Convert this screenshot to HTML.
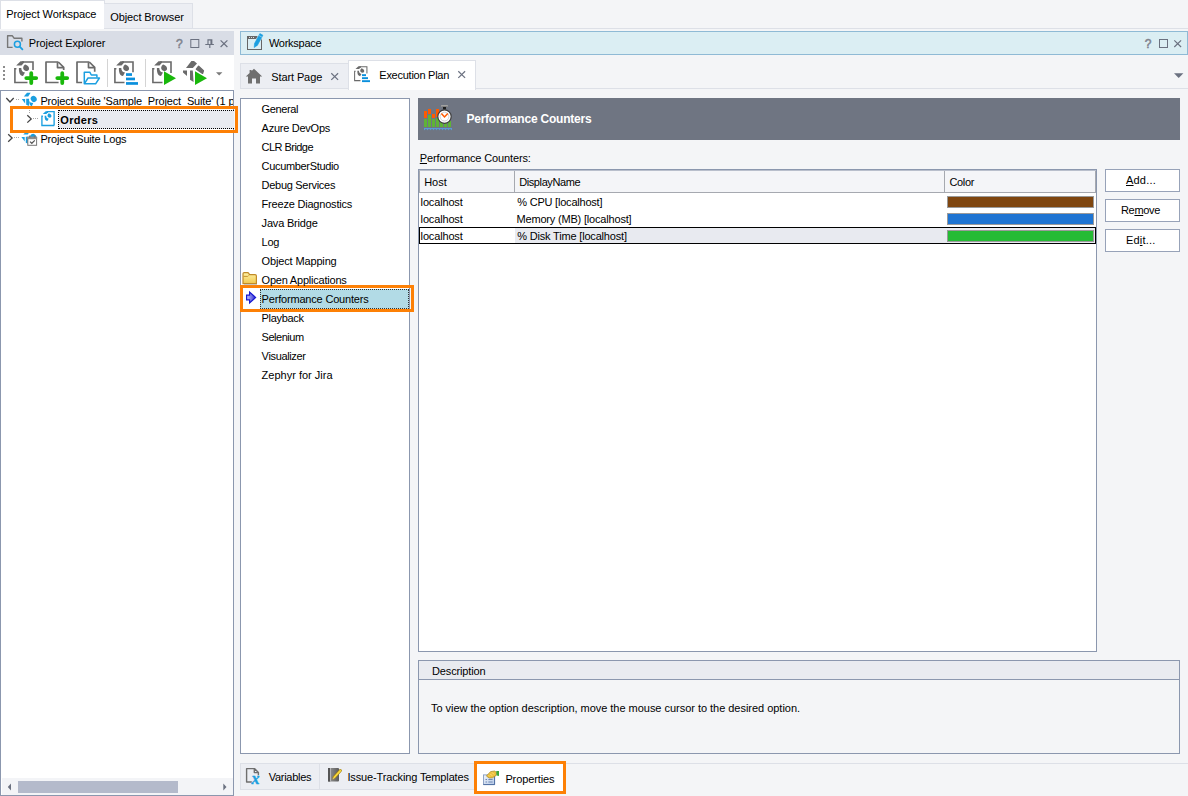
<!DOCTYPE html>
<html lang="en"><head><meta charset="utf-8"><title>Project Workspace</title>
<style>
*{box-sizing:border-box;margin:0;padding:0}
html,body{width:1188px;height:796px;overflow:hidden;background:#f4f5f7}
body{position:relative;font-family:"Liberation Sans",sans-serif;font-size:11px;color:#000}
.a{position:absolute}
.t{position:absolute;white-space:nowrap;line-height:16px;height:16px}
svg{position:absolute;overflow:visible}
u{text-decoration:underline;text-underline-offset:1px}
.btn{position:absolute;width:75px;height:23px;background:#fff;border:1px solid #97a2b8}
.bar{position:absolute;left:947px;width:147px;height:12px;border:1px solid #9a9a9a}

</style></head><body>
<div class="a" style="left:0px;top:28px;width:1188px;height:1px;background:#dde0e7;"></div>
<div class="a" style="left:0px;top:0px;width:104.5px;height:29px;background:#fff;border:1px solid #dde0e7;border-bottom:none;"></div>
<div class="a" style="left:104px;top:3px;width:89px;height:26px;background:#eceef3;border:1px solid #dde0e7;border-left:none;"></div>
<div class="a" style="left:0px;top:31px;width:234px;height:24px;background:#d9dde6;"></div>
<div class="a" style="left:0px;top:55px;width:234px;height:35px;background:#fff;"></div>
<div class="a" style="left:0px;top:90px;width:234px;height:705.5px;background:#fff;border:1px solid #8b97ae;"></div>
<div class="a" style="left:58px;top:110px;width:176px;height:19px;background:#e9ebf0;border:1px dotted #000;border-right:none;"></div>
<div class="a" style="left:10px;top:106px;width:228px;height:27px;border:3px solid #fd8005;z-index:5;"></div>
<div class="a" style="left:1.5px;top:778px;width:231.5px;height:16.5px;background:#f3f4f7;"></div>
<div class="a" style="left:18px;top:781px;width:160px;height:12px;background:#b4bacb;"></div>
<div class="a" style="left:240px;top:31px;width:948px;height:24px;background:#dbeef3;border:1px solid #8fbad5;"></div>
<div class="a" style="left:240px;top:88px;width:948px;height:1px;background:#dde0e7;"></div>
<div class="a" style="left:240px;top:63px;width:109px;height:26px;background:#eceef3;border:1px solid #dde0e7;"></div>
<div class="a" style="left:348px;top:60px;width:128px;height:30px;background:#fff;border:1px solid #dde0e7;border-bottom:none;"></div>
<div class="a" style="left:240px;top:98px;width:170px;height:656px;background:#fff;border:1px solid #8b97ae;"></div>
<div class="a" style="left:260px;top:289px;width:149px;height:19.5px;background:#b2dbe6;border:1px dotted #333;"></div>
<div class="a" style="left:240px;top:285px;width:174px;height:27px;border:3px solid #fd8005;"></div>
<div class="a" style="left:418px;top:98px;width:762px;height:41.5px;background:#6f7582;"></div>
<div class="a" style="left:418px;top:169px;width:679px;height:483px;background:#fff;border:1px solid #8b97ae;"></div>
<div class="a" style="left:419px;top:170px;width:677px;height:23px;background:#f4f5f8;border-bottom:1px solid #a6a9b0;border-top:1px solid #b9bfcc;border-left:1px solid #a6a9b0;"></div>
<div class="a" style="left:514px;top:171px;width:1px;height:21px;background:#a6a9b0;"></div>
<div class="a" style="left:944px;top:171px;width:1px;height:21px;background:#a6a9b0;"></div>
<div class="a" style="left:1095px;top:171px;width:1px;height:21px;background:#a6a9b0;"></div>
<div class="a" style="left:515px;top:227.5px;width:581px;height:16px;background:#e8eaf0;"></div>
<div class="a" style="left:419px;top:227px;width:677px;height:17px;border:1px solid #000;"></div>
<div class="bar" style="top:195.5px;background:#7f4610"></div>
<div class="bar" style="top:212.5px;background:#1e74d2"></div>
<div class="bar" style="top:229.5px;background:#25bb35"></div>
<div class="btn" style="left:1105px;top:169px"></div>
<div class="btn" style="left:1105px;top:199px"></div>
<div class="btn" style="left:1105px;top:229px"></div>
<div class="a" style="left:418px;top:660px;width:762px;height:94px;border:1px solid #8b97ae;"></div>
<div class="a" style="left:419px;top:661px;width:760px;height:18px;background:#e9ebf0;"></div>
<div class="a" style="left:419px;top:679px;width:760px;height:1px;background:#8b97ae;"></div>
<div class="a" style="left:240px;top:762.5px;width:948px;height:1px;background:#dde0e7;"></div>
<div class="a" style="left:240px;top:762.5px;width:235px;height:27px;background:#eceef3;border:1px solid #dde0e7;"></div>
<div class="a" style="left:319px;top:763px;width:1px;height:26px;background:#dde0e7;"></div>
<div class="a" style="left:474px;top:761px;width:92px;height:33px;background:#fff;border:3px solid #fd8005;"></div>
<svg width="1188" height="796" viewBox="0 0 1188 796" style="left:0;top:0"><rect x="3" y="66" width="2" height="2" fill="#8c8c8c"/><rect x="3" y="70" width="2" height="2" fill="#8c8c8c"/><rect x="3" y="74" width="2" height="2" fill="#8c8c8c"/><rect x="3" y="78" width="2" height="2" fill="#8c8c8c"/><path d="M16.40,68.70 H14.90 V82.50 H27.50" fill="none" stroke="#6a6a6a" stroke-width="1.60"/><path d="M22.00,62.00 H33.00 V70.00" fill="none" stroke="#6a6a6a" stroke-width="1.60"/><path d="M20.50,61.20 L24.00,61.20 L24.00,62.80 L21.50,65.50 L16.20,65.50 Z" fill="#6a6a6a"/><path d="M25.00,64.40 C27.50,65.00 29.60,67.00 29.00,69.20 C28.50,71.20 25.50,71.50 24.00,70.00 C22.60,68.50 23.00,66.00 25.00,64.40 Z" fill="#6a6a6a"/><path d="M18.90,68.00 H21.30 C21.30,70.40 22.20,71.80 25.00,72.60 L23.00,75.90 C19.60,75.50 18.80,72.50 18.90,68.00 Z" fill="#6a6a6a"/><path d="M26.30 78.10 h9.9 M31.25 73.20 v9.8" stroke="#19b80b" stroke-width="3.8" stroke-linecap="round" fill="none"/><path d="M58.60 82.50 H46.00 V62.00 H58.30" fill="none" stroke="#6a6a6a" stroke-width="1.7" stroke-linejoin="round"/><path d="M58.30 62.00 L63.70 67.40 V70.00" fill="none" stroke="#6a6a6a" stroke-width="1.7" stroke-linejoin="round"/><path d="M57.50 62.20 V67.60 H63.50" fill="none" stroke="#6a6a6a" stroke-width="1.7" stroke-linejoin="round"/><path d="M57.30 78.10 h9.9 M62.25 73.20 v9.8" stroke="#19b80b" stroke-width="3.8" stroke-linecap="round" fill="none"/><path d="M82.10 82.50 H77.00 V62.00 H89.30" fill="none" stroke="#6a6a6a" stroke-width="1.7" stroke-linejoin="round"/><path d="M89.30 62.00 L94.70 67.40 V71.70" fill="none" stroke="#6a6a6a" stroke-width="1.7" stroke-linejoin="round"/><path d="M88.50 62.20 V67.60 H94.50" fill="none" stroke="#6a6a6a" stroke-width="1.7" stroke-linejoin="round"/><path d="M84.3 83.5 V72.2 H89.8 L91.3 75 H96.9 V77.6" fill="none" stroke="#1b9fe0" stroke-width="1.5" stroke-linejoin="round"/><path d="M84.3 83.8 L88 78 H99.4 L95.6 83.8 Z" fill="none" stroke="#1b9fe0" stroke-width="1.5" stroke-linejoin="round"/><rect x="107" y="59" width="1" height="28" fill="#d4d4d4"/><path d="M116.40,68.70 H114.90 V82.50 H124.50" fill="none" stroke="#6a6a6a" stroke-width="1.60"/><path d="M122.00,62.00 H133.00 V72.20" fill="none" stroke="#6a6a6a" stroke-width="1.60"/><path d="M120.50,61.20 L124.00,61.20 L124.00,62.80 L121.50,65.50 L116.20,65.50 Z" fill="#6a6a6a"/><path d="M125.00,64.40 C127.50,65.00 129.60,67.00 129.00,69.20 C128.50,71.20 125.50,71.50 124.00,70.00 C122.60,68.50 123.00,66.00 125.00,64.40 Z" fill="#6a6a6a"/><path d="M118.90,68.00 H121.30 C121.30,70.40 122.20,71.80 125.00,72.60 L123.00,75.90 C119.60,75.50 118.80,72.50 118.90,68.00 Z" fill="#6a6a6a"/><rect x="126" y="73.2" width="6" height="2.7" fill="#0a8fdc"/><rect x="126" y="77.6" width="9" height="2.7" fill="#0a8fdc"/><rect x="126" y="82.1" width="12" height="2.7" fill="#0a8fdc"/><rect x="145" y="59" width="1" height="28" fill="#d4d4d4"/><path d="M154.40,68.70 H152.90 V82.50 H162.50" fill="none" stroke="#6a6a6a" stroke-width="1.60"/><path d="M160.00,62.00 H171.00 V73.00" fill="none" stroke="#6a6a6a" stroke-width="1.60"/><path d="M158.50,61.20 L162.00,61.20 L162.00,62.80 L159.50,65.50 L154.20,65.50 Z" fill="#6a6a6a"/><path d="M163.00,64.40 C165.50,65.00 167.60,67.00 167.00,69.20 C166.50,71.20 163.50,71.50 162.00,70.00 C160.60,68.50 161.00,66.00 163.00,64.40 Z" fill="#6a6a6a"/><path d="M156.90,68.00 H159.30 C159.30,70.40 160.20,71.80 163.00,72.60 L161.00,75.90 C157.60,75.50 156.80,72.50 156.90,68.00 Z" fill="#6a6a6a"/><path d="M164.00 71.20 V84.90 L176.00 78.30 Z" fill="#19b80b"/><path d="M191.40,61.00 L194.00,61.00 L197.00,63.40 L192.80,68.00 L186.00,68.00 Z" fill="#6a6a6a"/><path d="M183.00,70.60 L187.00,70.60 L187.00,76.00 L183.00,72.50 Z" fill="#6a6a6a"/><path d="M190.00,70.60 L192.80,70.60 L193.60,82.00 L190.00,79.80 Z" fill="#6a6a6a"/><path d="M198.60,66.20 L203.40,70.80 L202.60,73.40 L196.40,69.20 Z" fill="#6a6a6a" stroke="#6a6a6a" stroke-width="1.40" stroke-linejoin="round"/><path d="M195.00 71.20 V84.90 L207.00 78.30 Z" fill="#19b80b"/><path d="M216 72.3 h6.4 l-3.2 3.2 Z" fill="#7a7a7a"/><path d="M12.6 47.4 H7.6 V35.8 H12.4 L14 38.2 H21.9 V41.6" fill="none" stroke="#777" stroke-width="1.4" stroke-linejoin="round"/><circle cx="17.4" cy="44.3" r="3" fill="none" stroke="#1b9fe0" stroke-width="1.5"/><path d="M19.7 46.7 L22.4 49.4" stroke="#1b9fe0" stroke-width="1.8" stroke-linecap="round"/><text x="176.1" y="48" font-family="'Liberation Sans',sans-serif" font-size="12" fill="#7f838e" stroke="#7f838e" stroke-width="0.5">?</text><rect x="190.8" y="39.5" width="8" height="8" fill="none" stroke="#6b7180" stroke-width="1"/><path d="M205.3 44.5 h8.6 M209.8 44.5 v3.6 M208.0 44.5 v-4.6 h3.8 v4.6 M211.0 40 v4.5" fill="none" stroke="#6b7180" stroke-width="1.15"/><path d="M220.6 40.4 l6.8 6.6 M227.4 40.4 l-6.8 6.6" fill="none" stroke="#6b7180" stroke-width="1.2"/><text x="1144.8" y="48" font-family="'Liberation Sans',sans-serif" font-size="12" fill="#7f838e" stroke="#7f838e" stroke-width="0.5">?</text><rect x="1159.5" y="39.5" width="8" height="8" fill="none" stroke="#6b7180" stroke-width="1"/><path d="M1174.3 40.4 l6.8 6.6 M1181.1 40.4 l-6.8 6.6" fill="none" stroke="#6b7180" stroke-width="1.2"/><rect x="247.5" y="36.5" width="14" height="13" fill="none" stroke="#666" stroke-width="1"/><rect x="247" y="36" width="15" height="3" fill="#666"/><rect x="249" y="37" width="1" height="1" fill="#ddd"/><rect x="251" y="37" width="1" height="1" fill="#ddd"/><rect x="253" y="37" width="1" height="1" fill="#ddd"/><path d="M261.2 34.8 L256.4 43.6" stroke="#dbeef3" stroke-width="5" stroke-linecap="butt"/><path d="M259.9 33.6 L262.9 35.2 L257.5 45.2 L254.2 47.5 L254.5 43.6 Z" fill="#1b9fe0" stroke="#1b9fe0" stroke-width="0.6" stroke-linejoin="round"/><path d="M261.9 37.1 L258.8 35.4" stroke="#bfe3f3" stroke-width="0.6"/><path d="M254 68.8 L262.2 76.6 H260 V83.4 H256 V78.6 H252 V83.4 H248 V76.6 H245.8 L249.6 73 V70 H251.6 V71 Z" fill="#6f6f6f"/><path d="M331.3 73.3 l6.8 6.6 M338.1 73.3 l-6.8 6.6" fill="none" stroke="#6b7180" stroke-width="1.2"/><path d="M458.3 71.3 l6.8 6.6 M465.1 71.3 l-6.8 6.6" fill="none" stroke="#6b7180" stroke-width="1.2"/><path d="M355.63,71.24 H354.61 V80.62 H360.46" fill="none" stroke="#6a6a6a" stroke-width="1.02"/><path d="M359.44,66.68 H366.92 V73.48" fill="none" stroke="#6a6a6a" stroke-width="1.02"/><path d="M358.42,66.14 L360.80,66.14 L360.80,67.22 L359.10,69.06 L355.50,69.06 Z" fill="#6a6a6a"/><path d="M361.48,68.31 C363.18,68.72 364.61,70.08 364.20,71.58 C363.86,72.94 361.82,73.14 360.80,72.12 C359.85,71.10 360.12,69.40 361.48,68.31 Z" fill="#6a6a6a"/><path d="M357.33,70.76 H358.96 C358.96,72.39 359.58,73.34 361.48,73.89 L360.12,76.13 C357.81,75.86 357.26,73.82 357.33,70.76 Z" fill="#6a6a6a"/><rect x="362" y="74.2" width="4" height="1.9" fill="#0a8fdc"/><rect x="362" y="77.2" width="6" height="1.9" fill="#0a8fdc"/><rect x="362" y="80.2" width="8" height="1.9" fill="#0a8fdc"/><path d="M1174 73.2 h9.4 l-4.7 4.8 Z" fill="#6b7180"/><path d="M6.3 98 L10 102 L13.7 98" fill="none" stroke="#444" stroke-width="1.3"/><path d="M27.3 115.2 L31.2 118.9 L27.3 122.6" fill="none" stroke="#444" stroke-width="1.3"/><path d="M8.2 134.3 L12.1 138 L8.2 141.7" fill="none" stroke="#444" stroke-width="1.3"/><rect x="16" y="99" width="1" height="1" fill="#a8a8a8"/><rect x="18" y="99" width="1" height="1" fill="#a8a8a8"/><rect x="14" y="137" width="1" height="1" fill="#a8a8a8"/><rect x="16" y="137" width="1" height="1" fill="#a8a8a8"/><rect x="18" y="137" width="1" height="1" fill="#a8a8a8"/><rect x="33" y="118" width="1" height="1" fill="#a8a8a8"/><rect x="35" y="118" width="1" height="1" fill="#a8a8a8"/><rect x="37" y="118" width="1" height="1" fill="#a8a8a8"/><rect x="29" y="110" width="1" height="1" fill="#a8a8a8"/><rect x="29" y="112" width="1" height="1" fill="#a8a8a8"/><path d="M27.00,92.80 L30.60,92.80 L28.20,96.50 L23.80,96.50 Z" fill="#1b9fe0"/><path d="M21.80,99.10 L25.10,99.10 L25.10,103.50 Z" fill="#1b9fe0"/><path d="M26.20,98.70 L29.10,98.70 L29.10,106.00 L26.20,104.70 Z" fill="#1b9fe0"/><ellipse cx="33.70" cy="98.90" rx="2.9" ry="3.2" transform="rotate(-35 33.70 98.90)" fill="#1b9fe0"/><path d="M29.20,100.70 C29.80,102.30 31.00,102.90 33.20,102.90 L32.00,105.90 C30.60,105.90 29.20,105.10 29.20,100.70 Z" fill="#1b9fe0"/><path d="M42.92,116.20 H41.91 V125.51 H54.26" fill="none" stroke="#1b9fe0" stroke-width="1.35"/><path d="M46.70,111.67 H54.12 V125.58" fill="none" stroke="#1b9fe0" stroke-width="1.35"/><path d="M45.69,111.14 L48.05,111.14 L48.05,112.22 L46.36,114.04 L42.78,114.04 Z" fill="#1b9fe0"/><path d="M48.72,113.30 C50.41,113.70 51.83,115.05 51.42,116.53 C51.09,117.89 49.06,118.09 48.05,117.08 C47.10,116.06 47.38,114.38 48.72,113.30 Z" fill="#1b9fe0"/><path d="M44.61,115.72 H46.23 C46.23,117.34 46.83,118.29 48.72,118.83 L47.38,121.06 C45.08,120.79 44.54,118.76 44.61,115.72 Z" fill="#1b9fe0"/><path d="M26.60,130.80 L30.20,130.80 L27.80,134.50 L23.40,134.50 Z" fill="#1b9fe0"/><path d="M21.40,137.10 L24.70,137.10 L24.70,141.50 Z" fill="#1b9fe0"/><path d="M25.80,136.70 L28.70,136.70 L28.70,144.00 L25.80,142.70 Z" fill="#1b9fe0"/><ellipse cx="33.30" cy="136.90" rx="2.9" ry="3.2" transform="rotate(-35 33.30 136.90)" fill="#1b9fe0"/><path d="M28.80,138.70 C29.40,140.30 30.60,140.90 32.80,140.90 L31.60,143.90 C30.20,143.90 28.80,143.10 28.80,138.70 Z" fill="#1b9fe0"/><rect x="27.8" y="137.5" width="8.8" height="7.8" fill="#fff" stroke="#777" stroke-width="1"/><rect x="27.3" y="136.6" width="9.8" height="2.6" fill="#8e8e8e"/><rect x="29" y="135.6" width="1.6" height="2" fill="#777"/><rect x="33.8" y="135.6" width="1.6" height="2" fill="#777"/><path d="M30 141.6 L31.8 143.3 L34.8 140.4" fill="none" stroke="#555" stroke-width="1.2"/><path d="M11 783.6 V790.4 L7.8 787 Z" fill="#6b7180"/><path d="M223.3 783.6 V790.4 L226.5 787 Z" fill="#6b7180"/><path d="M243 283.6 V273.8 Q243 272.6 244.2 272.6 H247.4 Q248.4 272.6 248.9 273.6 L249.4 274.6 H255 Q256.4 274.6 256.4 276 V283.6 Z" fill="url(#fg)" stroke="#c08a28" stroke-width="1.2"/><path d="M243.6 276.4 H247.6 L248.6 275.6" fill="none" stroke="#c08a28" stroke-width="0.9"/><path d="M244 284.6 H257" stroke="#b9b9b9" stroke-width="0.8"/><defs><linearGradient id="ag" x1="0" x2="1" y1="0" y2="0"><stop offset="0" stop-color="#c4c4ff"/><stop offset="1" stop-color="#2a2ad0"/></linearGradient><linearGradient id="fg" x1="0" x2="0" y1="0" y2="1"><stop offset="0" stop-color="#fff3a8"/><stop offset="1" stop-color="#f0c84e"/></linearGradient></defs><path d="M246.6 295.2 H249.6 V292 L255.6 297.5 L249.6 303 V299.8 H246.6 Z" fill="url(#ag)" stroke="#1717cf" stroke-width="1.2" stroke-linejoin="miter"/><rect x="424" y="111" width="3" height="7" fill="#ff5a00"/><rect x="424" y="119" width="3" height="8" fill="#5fb336"/><rect x="428" y="109" width="3" height="5" fill="#ff5a00"/><rect x="428" y="115" width="3" height="12" fill="#5fb336"/><rect x="432" y="114" width="3" height="4" fill="#ff5a00"/><rect x="432" y="119" width="3" height="8" fill="#5fb336"/><rect x="436" y="109" width="3" height="8" fill="#ff5a00"/><rect x="436" y="118" width="3" height="9" fill="#5fb336"/><rect x="440" y="121" width="3" height="6" fill="#5fb336"/><rect x="444" y="121" width="3" height="6" fill="#5fb336"/><rect x="448" y="121" width="3" height="6" fill="#5fb336"/><rect x="424" y="128" width="28" height="1.2" fill="#5b9bd5"/><path d="M424 129.6 H452" stroke="#5b9bd5" stroke-width="1" stroke-dasharray="1 2"/><rect x="441" y="105" width="7" height="2" rx="0.6" fill="#a2a2a2"/><rect x="441.4" y="106.2" width="6.2" height="0.8" fill="#7a7a7a"/><rect x="443" y="107" width="3" height="2.4" fill="#1e1e1e"/><circle cx="444.5" cy="116.6" r="6.7" fill="#fff" stroke="#3c3c3c" stroke-width="1.2"/><circle cx="444.5" cy="116.6" r="4.4" fill="none" stroke="#d2d2d2" stroke-width="1"/><path d="M441.4 113.4 L444.5 116.9 L447.8 113.4" fill="none" stroke="#ff5a00" stroke-width="1.5"/><path d="M251.8 782 H246.6 V768.6 H254.5 L258.4 772.4 V775.2 M254.3 768.8 V772.6 H258.2" fill="none" stroke="#6f6f6f" stroke-width="1.4" stroke-linejoin="round"/><text x="251.6" y="783.8" stroke="#1b9fe0" stroke-width="0.4" font-family="'Liberation Serif',serif" font-style="italic" font-weight="bold" font-size="16" fill="#1b9fe0">x</text><defs><linearGradient id="ng" x1="0" x2="1" y1="0" y2="0"><stop offset="0" stop-color="#9a9a9a"/><stop offset="1" stop-color="#5a5a5a"/></linearGradient></defs><rect x="328" y="768" width="11" height="13.6" rx="1" fill="url(#ng)"/><rect x="328" y="768" width="2.2" height="13.6" fill="#555"/><rect x="330.2" y="768" width="0.8" height="13.6" fill="#c4c4c4"/><path d="M340.4 770.6 L333.8 777.8" stroke="#9a7a14" stroke-width="3" stroke-linecap="round"/><path d="M340.4 770.6 L333.8 777.8" stroke="#f8d83a" stroke-width="1.9" stroke-linecap="round"/><path d="M332.4 779.6 L332.9 777.2 L334.6 778.9 Z" fill="#e8d9a0" stroke="#7a6a30" stroke-width="0.4"/><defs><linearGradient id="pg" x1="0" x2="1" y1="0" y2="1"><stop offset="0" stop-color="#f2f6fc"/><stop offset="1" stop-color="#b4c8e6"/></linearGradient></defs><rect x="483.5" y="774.9" width="11" height="9.6" fill="url(#pg)" stroke="#8ea3c6" stroke-width="1"/><path d="M483.4 784.6 H494.6 V775" fill="none" stroke="#4f6fa3" stroke-width="1"/><path d="M485.5 779.5 H487 M488.4 779.5 H492.6 M485.5 782 H487 M488.4 782 H492.6" stroke="#6f88b4" stroke-width="1"/><path d="M486.4 776 L490.6 771.6 L494.6 771 L496.6 772.4 L496.2 775.4 L492.4 777.8 L489.2 778 Z" fill="#efc03c" stroke="#a8882a" stroke-width="0.7" stroke-linejoin="round"/><path d="M488.6 775.4 l1 1 M490.2 773.8 l2 2 M492 772.4 l2 2" stroke="#fbe9a0" stroke-width="0.7"/><path d="M496.2 771 H499 V776 L496.6 775.4 Z" fill="#3da53d"/></svg>
<div class="t" style="left:6.3px;top:6.2px;font-size:11px;letter-spacing:-0.124px;">Project Workspace</div>
<div class="t" style="left:110.3px;top:9.2px;font-size:11px;letter-spacing:-0.122px;">Object Browser</div>
<div class="t" style="left:28.8px;top:35.2px;font-size:11px;letter-spacing:-0.110px;">Project Explorer</div>
<div class="t" style="left:268.9px;top:34.8px;font-size:11px;letter-spacing:-0.259px;">Workspace</div>
<div class="t" style="left:271.2px;top:69.2px;font-size:11px;letter-spacing:-0.098px;">Start Page</div>
<div class="t" style="left:379.3px;top:66.9px;font-size:11px;letter-spacing:-0.256px;">Execution Plan</div>
<div class="t" style="left:40.4px;top:92.9px;font-size:11px;letter-spacing:-0.158px;width:192.6px;overflow:hidden;">Project Suite 'Sample_Project_Suite' (1 p</div>
<div class="t" style="left:60.3px;top:111.8px;font-size:11px;letter-spacing:0.320px;font-weight:bold;">Orders</div>
<div class="t" style="left:40.4px;top:130.8px;font-size:11px;letter-spacing:-0.182px;">Project Suite Logs</div>
<div class="t" style="left:261.6px;top:100.8px;font-size:11px;letter-spacing:-0.377px;">General</div>
<div class="t" style="left:261.6px;top:119.8px;font-size:11px;letter-spacing:-0.261px;">Azure DevOps</div>
<div class="t" style="left:261.6px;top:138.8px;font-size:11px;letter-spacing:-0.546px;">CLR Bridge</div>
<div class="t" style="left:261.6px;top:157.8px;font-size:11px;letter-spacing:-0.331px;">CucumberStudio</div>
<div class="t" style="left:261.6px;top:176.8px;font-size:11px;letter-spacing:-0.297px;">Debug Services</div>
<div class="t" style="left:261.6px;top:195.8px;font-size:11px;letter-spacing:-0.203px;">Freeze Diagnostics</div>
<div class="t" style="left:261.6px;top:214.8px;font-size:11px;letter-spacing:-0.190px;">Java Bridge</div>
<div class="t" style="left:261.6px;top:233.8px;font-size:11px;letter-spacing:-0.286px;">Log</div>
<div class="t" style="left:261.6px;top:252.8px;font-size:11px;letter-spacing:-0.146px;">Object Mapping</div>
<div class="t" style="left:261.6px;top:271.8px;font-size:11px;letter-spacing:-0.216px;">Open Applications</div>
<div class="t" style="left:261.6px;top:290.8px;font-size:11px;letter-spacing:-0.184px;">Performance Counters</div>
<div class="t" style="left:261.6px;top:309.8px;font-size:11px;letter-spacing:-0.330px;">Playback</div>
<div class="t" style="left:261.6px;top:328.8px;font-size:11px;letter-spacing:-0.482px;">Selenium</div>
<div class="t" style="left:261.6px;top:347.8px;font-size:11px;letter-spacing:-0.350px;">Visualizer</div>
<div class="t" style="left:261.6px;top:366.8px;font-size:11px;letter-spacing:0.005px;">Zephyr for Jira</div>
<div class="t" style="left:466.4px;top:110.8px;font-size:12px;letter-spacing:-0.219px;font-weight:bold;color:#fff;">Performance Counters</div>
<div class="t" style="left:419.8px;top:150.0px;font-size:11px;letter-spacing:-0.130px;"><u>P</u>erformance Counters:</div>
<div class="t" style="left:424.2px;top:173.8px;font-size:11px;letter-spacing:-0.031px;">Host</div>
<div class="t" style="left:519.2px;top:173.8px;font-size:11px;letter-spacing:-0.402px;">DisplayName</div>
<div class="t" style="left:949.5px;top:173.8px;font-size:11px;letter-spacing:-0.359px;">Color</div>
<div class="t" style="left:420.6px;top:193.8px;font-size:11px;letter-spacing:-0.158px;">localhost</div>
<div class="t" style="left:420.6px;top:210.8px;font-size:11px;letter-spacing:-0.158px;">localhost</div>
<div class="t" style="left:420.6px;top:227.8px;font-size:11px;letter-spacing:-0.158px;">localhost</div>
<div class="t" style="left:517.3px;top:193.8px;font-size:11px;letter-spacing:-0.215px;">% CPU [localhost]</div>
<div class="t" style="left:516.5px;top:210.8px;font-size:11px;letter-spacing:-0.183px;">Memory (MB) [localhost]</div>
<div class="t" style="left:517.3px;top:227.8px;font-size:11px;letter-spacing:-0.183px;">% Disk Time [localhost]</div>
<div class="t" style="left:1126.0px;top:171.8px;font-size:11px;letter-spacing:0.208px;"><u>A</u>dd...</div>
<div class="t" style="left:1121.0px;top:201.8px;font-size:11px;letter-spacing:-0.331px;">Re<u>m</u>ove</div>
<div class="t" style="left:1126.0px;top:231.8px;font-size:11px;letter-spacing:0.192px;">Ed<u>i</u>t...</div>
<div class="t" style="left:432.0px;top:662.8px;font-size:11px;letter-spacing:-0.139px;">Description</div>
<div class="t" style="left:431.0px;top:699.8px;font-size:11px;letter-spacing:-0.028px;">To view the option description, move the mouse cursor to the desired option.</div>
<div class="t" style="left:268.7px;top:768.8px;font-size:11px;letter-spacing:-0.283px;">Variables</div>
<div class="t" style="left:347.4px;top:768.8px;font-size:11px;letter-spacing:-0.134px;">Issue-Tracking Templates</div>
<div class="t" style="left:505.4px;top:770.8px;font-size:11px;letter-spacing:-0.114px;">Properties</div>
</body></html>
